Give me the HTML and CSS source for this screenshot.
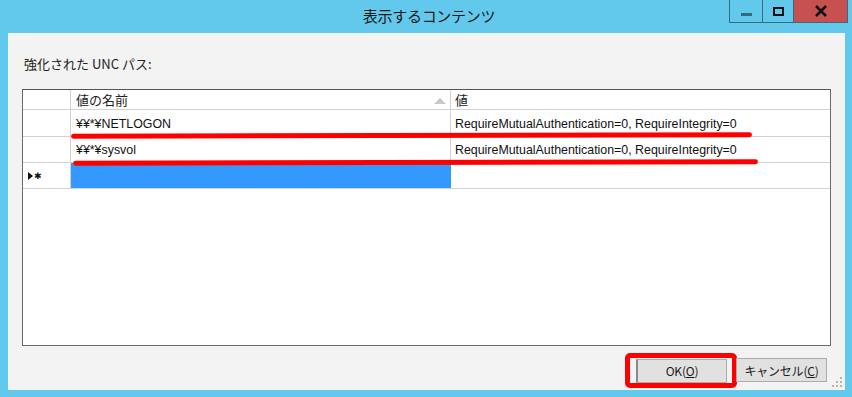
FILE: index.html
```html
<!DOCTYPE html>
<html lang="ja">
<head>
<meta charset="utf-8">
<link rel="stylesheet" href="styles.css">
</head>
<body>
<div class="window">
  <div class="titlebar">
    <div class="title">表示するコンテンツ</div>
    <div class="controls">
      <div class="ctl min"><span class="min-bar"></span></div>
      <div class="ctl max"><span class="max-box"></span></div>
      <div class="ctl close">
        <svg width="14" height="12" viewBox="0 0 14 12"><path d="M2 1 L12 11 M12 1 L2 11" stroke="#111" stroke-width="2.6" fill="none"/></svg>
      </div>
    </div>
  </div>
  <div class="client">
    <div class="label">強化された UNC パス:</div>
    <div class="grid">
      <div class="row head">
        <div class="cell rh"></div>
        <div class="cell c1">値の名前<span class="sort"></span></div>
        <div class="cell c2">値</div>
      </div>
      <div class="row r1">
        <div class="cell rh"></div>
        <div class="cell c1">¥¥*¥NETLOGON</div>
        <div class="cell c2">RequireMutualAuthentication=0, RequireIntegrity=0</div>
        <span class="mark mark1"></span>
      </div>
      <div class="row r2">
        <div class="cell rh"></div>
        <div class="cell c1">¥¥*¥sysvol</div>
        <div class="cell c2">RequireMutualAuthentication=0, RequireIntegrity=0</div>
        <span class="mark mark2"></span>
      </div>
      <div class="row r3">
        <div class="cell rh"><span class="tri"></span><span class="star">✱</span></div>
        <div class="cell c1 sel"></div>
        <div class="cell c2"></div>
      </div>
    </div>
    <div class="buttons">
      <div class="okwrap">
        <div class="btn ok">OK(<u>O</u>)</div>
      </div>
      <div class="btn cancel">キャンセル(<u>C</u>)</div>
    </div>
    <div class="grip">
      <svg width="10" height="10" viewBox="0 0 10 10" fill="#b4b4b4">
        <rect x="8" y="0" width="2" height="2"/>
        <rect x="4" y="4" width="2" height="2"/><rect x="8" y="4" width="2" height="2"/>
        <rect x="0" y="8" width="2" height="2"/><rect x="4" y="8" width="2" height="2"/><rect x="8" y="8" width="2" height="2"/>
      </svg>
    </div>
  </div>
</div>
</body>
</html>
```
FILE: styles.css
```css
* { box-sizing: border-box; }
html, body { margin: 0; padding: 0; }
body {
  width: 852px;
  height: 397px;
  background: #62c9ec;
  font-family: "Liberation Sans", "Noto Sans CJK JP", sans-serif;
  font-size: 12.4px;
  color: #111;
  overflow: hidden;
}
.window {
  display: flex;
  flex-direction: column;
  height: 397px;
}
.titlebar {
  position: relative;
  height: 33px;
  display: flex;
  justify-content: center;
}
.title {
  font-family: "Noto Sans CJK JP", sans-serif;
  font-size: 15px;
  color: #1a1a1a;
  padding-top: 5px;
  padding-left: 6px;
  letter-spacing: -0.3px;
}
.controls {
  position: absolute;
  top: 0;
  right: 4px;
  display: flex;
  height: 23px;
  border: 1px solid #3a6b7c;
  border-top: none;
}
.ctl {
  height: 22px;
  display: flex;
  align-items: center;
  justify-content: center;
}
.min { width: 33px; border-right: 1px solid #3a6b7c; }
.max { width: 31px; border-right: 1px solid #3a6b7c; }
.close { width: 53px; background: #c75050; }
.min-bar { width: 11px; height: 3px; background: #2f6c80; margin-top: 6px; }
.max-box { width: 11px; height: 9px; border: 2px solid #111; }
.client {
  position: relative;
  flex: 1;
  margin: 0 7px 7px 8px;
  background: #f3f3f3;
  padding: 0 14px 0 14px;
  display: flex;
  flex-direction: column;
}
.label {
  font-family: "Noto Sans CJK JP", sans-serif;
  font-size: 13px;
  color: #222;
  margin-top: 21px;
  margin-left: 2px;
  height: 35px;
}
.grid {
  height: 257px;
  border: 1px solid #6a6a6a;
  border-top-color: #555;
  background: #fff;
}
.row {
  position: relative;
  display: flex;
  border-bottom: 1px solid #d2d2d2;
}
.head { height: 20px; }
.r1 { height: 27px; }
.r2 { height: 26px; }
.r3 { height: 26px; }
.cell {
  display: flex;
  align-items: center;
  border-right: 1px solid #d2d2d2;
  white-space: nowrap;
  overflow: hidden;
}
.rh { width: 48px; padding-left: 5px; }
.c1 { width: 380px; padding-left: 5px; position: relative; }
.c2 { flex: 1; padding-left: 4px; border-right: none; }
.r1 .cell, .r2 .cell { padding-top: 1px; }
.head .cell { font-family: "Noto Sans CJK JP", sans-serif; font-size: 13px; color: #222; }
.sel { background: #3399ff; border-right-color: #3399ff; }
.sort {
  position: absolute;
  right: 4px;
  top: 8px;
  width: 0; height: 0;
  border-left: 6px solid transparent;
  border-right: 6px solid transparent;
  border-bottom: 6px solid #c8c8c8;
}
.tri {
  width: 0; height: 0;
  border-top: 4px solid transparent;
  border-bottom: 4px solid transparent;
  border-left: 5px solid #111;
}
.star { font-size: 9px; margin-left: 1px; font-family: "DejaVu Sans", sans-serif; }
.mark {
  position: absolute;
  height: 5px;
  background: #ff0000;
  border-radius: 3px;
  z-index: 2;
}
.mark1 { left: 48px; width: 681px; bottom: -2px; transform: rotate(-0.12deg); }
.mark2 { left: 50px; width: 685px; bottom: -3px; transform: rotate(-0.12deg); }
.buttons {
  display: flex;
  justify-content: flex-end;
  margin-top: 7px;
  margin-right: 4px;
}
.okwrap {
  border: 5px solid #ff0000;
  border-radius: 5px;
  padding: 0 5px 0 6px;
  height: 35px;
  display: flex;
  align-items: center;
  margin-right: -1px;
}
.btn {
  height: 24px;
  border: 1px solid #acacac;
  background: #e1e1e1;
  display: flex;
  align-items: center;
  justify-content: center;
  font-family: "Noto Sans CJK JP", sans-serif;
  font-size: 12px;
  color: #1a1a1a;
  letter-spacing: -0.2px;
}
.ok { width: 91px; border-left: 2px solid #8a8a8a; }
.cancel { width: 91px; margin-top: 5px; }
.btn u { text-decoration: underline; }
.grip {
  position: absolute;
  right: 3px;
  bottom: 3px;
  line-height: 0;
}
```
